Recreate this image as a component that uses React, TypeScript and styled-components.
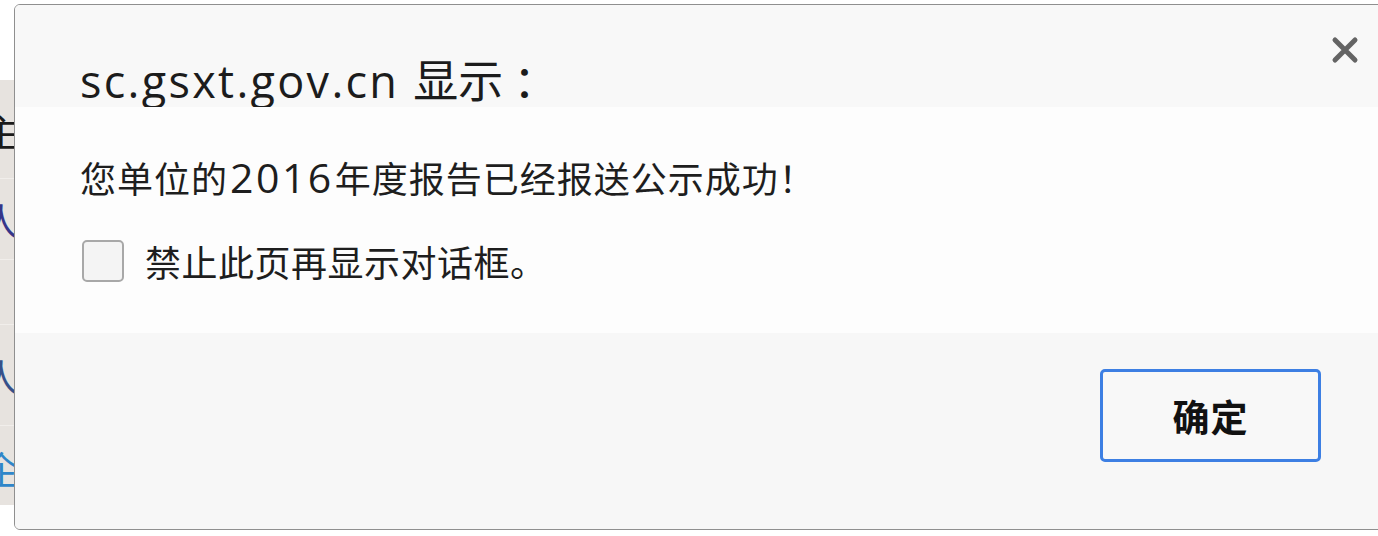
import React from 'react';
import styled, { createGlobalStyle } from 'styled-components';

const GlobalStyle = createGlobalStyle`
  html, body {
    margin: 0;
    padding: 0;
    background: #ffffff;
  }
  body {
    font-family: "Noto Sans", "Noto Sans CJK SC", sans-serif;
  }
`;

const Page = styled.div`
  position: relative;
  width: 1378px;
  height: 536px;
  overflow: hidden;
  background: #ffffff;
`;

// the page behind the dialog, only a thin slice is visible on the left
const BackStrip = styled.div`
  margin-top: 80px;
  width: 14px;
  height: 425px;
  overflow: hidden;
  background: #e7e3df;
  display: flex;
  flex-direction: column;
`;

const BackRow = styled.div<{ $h: number; $color: string }>`
  height: ${(p) => p.$h}px;
  flex: none;
  display: flex;
  align-items: center;
  justify-content: flex-end;
  border-bottom: 1px solid #f1eeeb;
  font-family: "Noto Sans CJK SC", sans-serif;
  font-size: 38px;
  color: ${(p) => p.$color};
  white-space: nowrap;

  span {
    margin-right: -6px;
  }
`;

const Dialog = styled.div`
  position: absolute;
  left: 14px;
  top: 4px;
  width: 1370px;
  height: 526px;
  box-sizing: border-box;
  border: 1px solid #8f8f8f;
  border-radius: 6px;
  background: #f7f7f7;
  display: flex;
  flex-direction: column;
  overflow: hidden;
  color: #1a1a1a;
`;

const Header = styled.div`
  height: 102px;
  flex: none;
  display: flex;
  justify-content: space-between;
  align-items: flex-start;
  padding: 0 24px 0 65px;
  box-sizing: border-box;
  background: #f8f8f8;
`;

const Title = styled.div`
  margin-top: 46px;
  font-family: "Open Sans", "Noto Sans CJK SC", sans-serif;
  font-size: 45px;
  line-height: 56px;
  color: #1c1c1c;
  letter-spacing: 2.3px;
  white-space: pre;

  em {
    font-style: normal;
    font-family: "Noto Sans CJK SC", sans-serif;
    letter-spacing: 0;
    margin-left: 0;
  }
`;

const CloseButton = styled.button`
  margin-top: 31px;
  width: 28px;
  height: 28px;
  padding: 0;
  border: none;
  background: transparent;
  display: flex;
  align-items: center;
  justify-content: center;
  cursor: pointer;
`;

const Body = styled.div`
  height: 226px;
  flex: none;
  background: #fdfdfd;
  padding: 48px 0 0 65px;
  box-sizing: border-box;
  display: flex;
  flex-direction: column;
  gap: 40px;
`;

const Message = styled.div`
  font-family: "Noto Sans CJK SC", sans-serif;
  font-size: 36px;
  line-height: 44px;
  color: #1e1e1e;
  letter-spacing: 1px;
`;

const Year = styled.span`
  font-family: "Open Sans", sans-serif;
  font-size: 41px;
  line-height: 0;
  letter-spacing: 2.5px;
  margin: 0 1px 0 2px;
`;

const CheckRow = styled.label`
  display: flex;
  align-items: center;
  gap: 21px;
  margin-left: 2px;
  font-family: "Noto Sans CJK SC", sans-serif;
  font-size: 36px;
  line-height: 44px;
  color: #1e1e1e;
  letter-spacing: 0.5px;
  cursor: pointer;
`;

const CheckBox = styled.span`
  width: 42px;
  height: 42px;
  box-sizing: border-box;
  border: 2px solid #a8a8a8;
  border-radius: 5px;
  background: #f4f4f4;
  flex: none;
`;

const Footer = styled.div`
  flex: 1;
  background: #f7f7f7;
  display: flex;
  justify-content: flex-end;
  align-items: flex-start;
  padding: 36px 62px 0 0;
`;

const OkButton = styled.button`
  width: 221px;
  height: 93px;
  box-sizing: border-box;
  border: 3px solid #3d7fe3;
  border-radius: 5px;
  background: #f8f8f8;
  font-family: "Noto Sans CJK SC", sans-serif;
  font-size: 37px;
  font-weight: 700;
  color: #111111;
  letter-spacing: 1px;
  cursor: pointer;
`;

const CloseIcon = () => (
  <svg width="28" height="28" viewBox="0 0 28 28">
    <path
      d="M4 4 L24 24 M24 4 L4 24"
      stroke="#646464"
      strokeWidth="5"
      strokeLinecap="round"
    />
  </svg>
);

export default function App() {
  return (
    <>
      <GlobalStyle />
      <Page>
        <BackStrip>
          <BackRow $h={98} $color="#1a1a1a">
            <span>主</span>
          </BackRow>
          <BackRow $h={80} $color="#35358a">
            <span>人</span>
          </BackRow>
          <BackRow $h={64} $color="#f1eeeb" />
          <BackRow $h={100} $color="#35508a">
            <span>人</span>
          </BackRow>
          <BackRow $h={83} $color="#2f86c9">
            <span>企</span>
          </BackRow>
        </BackStrip>

        <Dialog role="dialog">
          <Header>
            <Title>
              sc.gsxt.gov.cn <em>显示 ：</em>
            </Title>
            <CloseButton aria-label="关闭">
              <CloseIcon />
            </CloseButton>
          </Header>
          <Body>
            <Message>
              您单位的<Year>2016</Year>年度报告已经报送公示成功！
            </Message>
            <CheckRow>
              <CheckBox />
              禁止此页再显示对话框。
            </CheckRow>
          </Body>
          <Footer>
            <OkButton>确定</OkButton>
          </Footer>
        </Dialog>
      </Page>
    </>
  );
}
